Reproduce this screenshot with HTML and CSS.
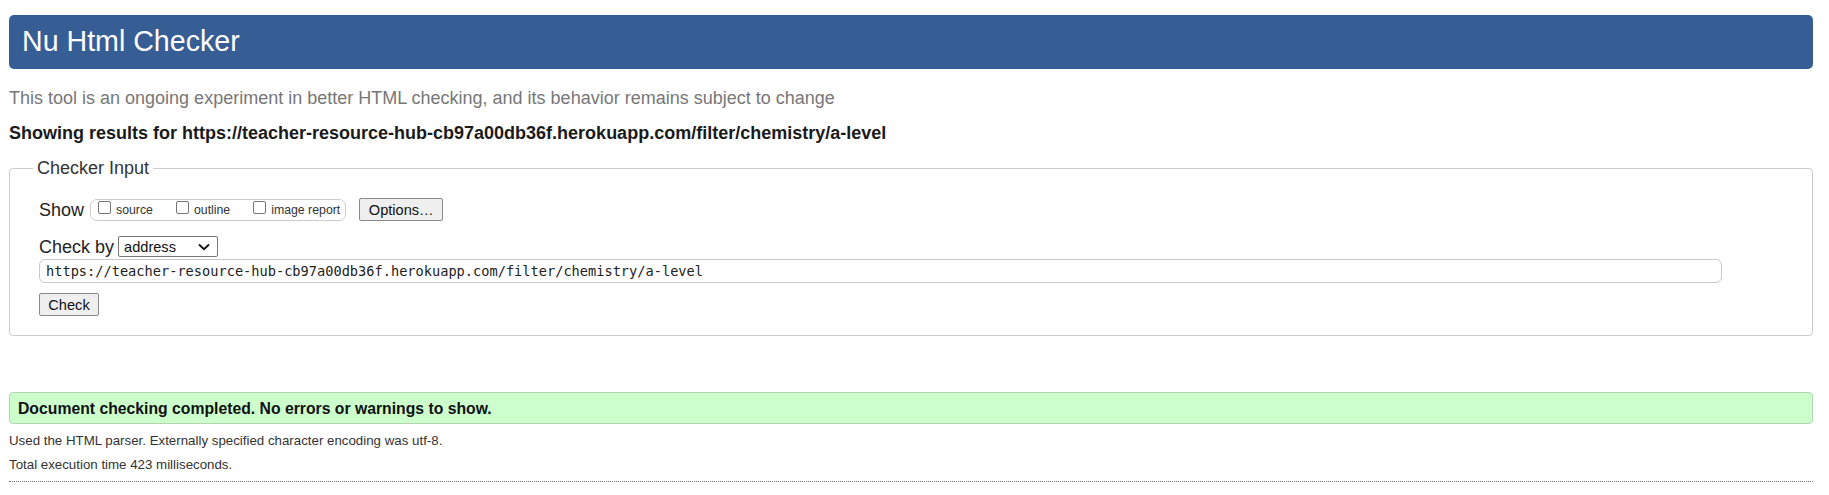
FILE: index.html
```html
<!DOCTYPE html>
<html lang="en">
<head>
<meta charset="utf-8">
<title>Showing results for https://teacher-resource-hub-cb97a00db36f.herokuapp.com/filter/chemistry/a-level - Nu Html Checker</title>
<link rel="stylesheet" href="styles.css">
</head>
<body>
<header class="banner"><h1 class="title">Nu Html Checker</h1></header>
<p class="tagline">This tool is an ongoing experiment in better HTML checking, and its behavior remains subject to change</p>
<p class="results-for">Showing results for https://teacher-resource-hub-cb97a00db36f.herokuapp.com/filter/chemistry/a-level</p>
<form class="checker-form">
  <fieldset class="checker">
    <legend class="checker-legend">Checker Input</legend>
    <div class="row show-row">
      <span class="row-label show-label">Show</span>
      <span class="show-group">
        <label class="opt"><input type="checkbox" class="cb"><span class="opt-text">source</span></label>
        <label class="opt"><input type="checkbox" class="cb"><span class="opt-text">outline</span></label>
        <label class="opt"><input type="checkbox" class="cb"><span class="opt-text">image report</span></label>
      </span>
      <button type="button" class="btn options-btn">Options…</button>
    </div>
    <div class="row by-row">
      <label class="row-label by-label" for="docselect">Check by</label>
      <span class="select-wrap">
        <select id="docselect" class="select"><option>address</option></select>
        <svg class="chevron" width="12" height="8" viewBox="0 0 12 8"><path d="M1 1.5 L6 6.2 L11 1.5" fill="none" stroke="#111" stroke-width="1.8"/></svg>
      </span>
    </div>
    <input class="url" type="text" value="https://teacher-resource-hub-cb97a00db36f.herokuapp.com/filter/chemistry/a-level">
    <div class="row submit-row"><button type="button" class="btn check-btn">Check</button></div>
  </fieldset>
</form>
<div class="success">Document checking completed. No errors or warnings to show.</div>
<p class="meta meta-first">Used the HTML parser. Externally specified character encoding was utf-8.</p>
<p class="meta meta-second">Total execution time 423 milliseconds.</p>
<hr class="rule">
</body>
</html>
```
FILE: styles.css
```css
html, body {
  background: #fff;
}
body {
  margin: 0;
  padding: 15px 16px 0 9px;
  font-family: "Liberation Sans", Arial, sans-serif;
  font-size: 18px;
  color: #222;
}
.banner {
  background: #365d94;
  border-radius: 5px;
  height: 54px;
  padding: 0 13px;
  box-sizing: border-box;
}
.title {
  margin: 0;
  font-size: 28.6px;
  font-weight: normal;
  line-height: 52px;
  color: #fff;
}
.tagline {
  margin: 18px 0 0;
  line-height: 22px;
  color: #777;
}
.results-for {
  margin: 13px 0 0;
  line-height: 22px;
  font-weight: bold;
  color: #1a1a1a;
}
.checker-form {
  margin: 13px 0 0;
}
.checker {
  margin: 0;
  min-width: 0;
  border: 1px solid #ccc;
  border-radius: 4px;
  padding: 19px 20px 19px 29px;
}
.checker-legend {
  padding: 0 4px;
  margin-left: -6px;
  line-height: 22px;
  color: #333;
}
.row {
  display: flex;
  align-items: center;
}
.show-row {
  height: 23px;
}
.row-label {
  line-height: 22px;
  color: #222;
}
.show-label {
  margin-right: 6px;
}
.show-group {
  display: flex;
  align-items: flex-start;
  box-sizing: border-box;
  height: 22px;
  border: 1px solid #ccc;
  border-radius: 7px;
  padding: 1px 5px 0 7px;
  margin-right: 13px;
}
.opt {
  display: flex;
  align-items: flex-start;
  margin-right: 23px;
}
.opt:last-child {
  margin-right: 0;
}
.cb {
  appearance: none;
  -webkit-appearance: none;
  box-sizing: border-box;
  width: 13px;
  height: 13px;
  margin: 0 5px 0 0;
  border: 1px solid #767676;
  border-radius: 2px;
  background: #fff;
}
.opt-text {
  font-size: 12.3px;
  line-height: 15px;
  margin-top: 2px;
  color: #333;
}
.btn {
  box-sizing: border-box;
  height: 23px;
  padding: 0;
  font-family: "Liberation Sans", Arial, sans-serif;
  font-size: 14.6px;
  color: #111;
  background: #efefef;
  border: 1px solid #8a8a8a;
  border-radius: 2px;
}
.options-btn {
  width: 84px;
}
.by-row {
  margin-top: 15px;
  height: 21px;
}
.by-label {
  margin-right: 4px;
}
.select-wrap {
  position: relative;
  display: inline-block;
}
.select {
  appearance: none;
  -webkit-appearance: none;
  box-sizing: border-box;
  width: 100px;
  height: 21px;
  padding: 0 0 0 5px;
  font-family: "Liberation Sans", Arial, sans-serif;
  font-size: 14.6px;
  color: #111;
  background: #fff;
  border: 1px solid #767676;
  border-radius: 2px;
  display: block;
}
.chevron {
  position: absolute;
  right: 8px;
  top: 7px;
  pointer-events: none;
}
.url {
  display: block;
  box-sizing: border-box;
  width: 1683px;
  height: 24px;
  margin: 2px 0 0;
  padding: 0 6px;
  font-family: "DejaVu Sans Mono", "Liberation Mono", monospace;
  font-size: 13.65px;
  color: #222;
  background: #fff;
  border: 1px solid #c8c8c8;
  border-radius: 6px;
}
.submit-row {
  margin-top: 10px;
}
.check-btn {
  width: 60px;
}
.success {
  margin-top: 56px;
  box-sizing: border-box;
  height: 32px;
  padding: 5px 8px 0;
  line-height: 21px;
  font-size: 15.75px;
  font-weight: bold;
  color: #111;
  background: #ccffcc;
  border: 1px solid #b3d3b3;
  border-radius: 4px;
}
.meta {
  margin: 0;
  font-size: 13.3px;
  line-height: 18px;
  color: #333;
}
.meta-first {
  margin-top: 8px;
}
.meta-second {
  margin-top: 6px;
}
.rule {
  margin: 7px 0 0;
  border: 0;
  border-top: 1px dotted #777;
  height: 0;
}
```
